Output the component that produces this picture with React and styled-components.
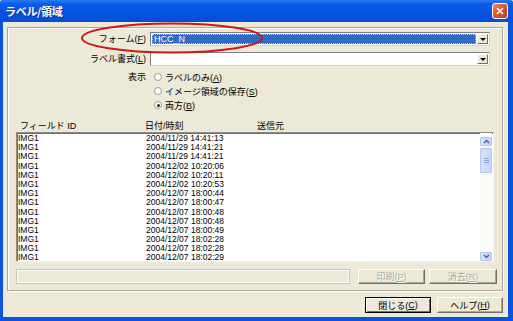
import React from 'react';
import styled, { createGlobalStyle } from 'styled-components';

const GlobalStyle = createGlobalStyle`
    html, body {
        margin: 0;
        padding: 0;
        background: #fff;
    }
    body {
        font-family: "Liberation Sans", "Noto Sans CJK JP", sans-serif;
        font-size: 9px;
        color: #000;
    }
`;

const Window = styled.div`
    position: relative;
    width: 513px;
    height: 321px;
    display: flex;
    flex-direction: column;
    overflow: hidden;
`;

const TitleBar = styled.div`
    height: 22px;
    flex: none;
    display: flex;
    align-items: center;
    justify-content: space-between;
    padding: 0 5px 0 5px;
    box-sizing: border-box;
    background: linear-gradient(to bottom, #2a7cf2 0%, #0a5ce8 18%, #0553e1 55%, #0450dc 85%, #0a4cc8 100%);
    border-radius: 2px 2px 0 0;
`;

const Title = styled.span`
    color: #fff;
    font-family: "Noto Sans CJK JP", sans-serif;
    font-weight: bold;
    font-size: 11px;
    text-shadow: 1px 1px 0 #0b2f8c;
    letter-spacing: -0.3px;
`;

const CloseButton = styled.div`
    width: 16px;
    height: 16px;
    box-sizing: border-box;
    border: 1px solid #fff;
    border-radius: 3px;
    background: linear-gradient(135deg, #f08a6c 0%, #e0512c 50%, #c53a18 100%);
    display: flex;
    align-items: center;
    justify-content: center;
`;

const Frame = styled.div`
    flex: 1;
    display: flex;
    background: #0b52dc;
    padding: 0 5px 4px 3px;
`;

const Client = styled.div`
    flex: 1;
    display: flex;
    flex-direction: column;
    background: #ece9d8;
    padding: 5px 5px 4px 4px;
`;

const GroupBox = styled.div`
    height: 264px;
    box-sizing: border-box;
    border: 1px solid #aca899;
    box-shadow: inset 1px 1px 0 #fff, 1px 1px 0 #fff;
    padding: 4px 0 6px 0;
    display: flex;
    flex-direction: column;
`;

const FieldRow = styled.div`
    display: grid;
    grid-template-columns: 138px 340px;
    column-gap: 4px;
    align-items: center;
    height: 14px;
    margin-top: ${({ $gap }) => $gap || 0}px;
`;

const Label = styled.span`
    text-align: right;
    white-space: nowrap;
    line-height: 14px;
`;

const Combo = styled.div`
    height: 14px;
    box-sizing: border-box;
    border: 1px solid #7f7f7f;
    border-right-color: #d4d0c8;
    border-bottom-color: #d4d0c8;
    background: #fff;
    display: flex;
    align-items: stretch;
    padding: 1px;
`;

const ComboText = styled.div`
    flex: 1;
    margin-right: 1px;
    padding-left: 2px;
    line-height: 10px;
    box-sizing: border-box;
    background: ${({ $selected }) => ($selected ? '#316ac5' : '#fff')};
    color: ${({ $selected }) => ($selected ? '#fff' : '#000')};
    outline: ${({ $selected }) => ($selected ? '1px dotted #b9c6e6' : 'none')};
    outline-offset: -1px;
`;

const DropButton = styled.div`
    width: 11px;
    box-sizing: border-box;
    background: #ece9d8;
    border: 1px solid;
    border-color: #fff #716f64 #716f64 #fff;
    display: flex;
    align-items: center;
    justify-content: center;

    &:after {
        content: '';
        border-left: 3px solid transparent;
        border-right: 3px solid transparent;
        border-top: 3px solid #000;
    }
`;

const DisplayGroup = styled.div`
    display: grid;
    grid-template-columns: 138px auto;
    column-gap: 8px;
    margin-top: 4px;
`;

const RadioList = styled.div`
    display: flex;
    flex-direction: column;
`;

const RadioItem = styled.div`
    height: 14px;
    display: flex;
    align-items: center;
    gap: 3px;
    white-space: nowrap;
`;

const RadioCircle = styled.span`
    width: 8px;
    height: 8px;
    box-sizing: border-box;
    border-radius: 50%;
    border: 1px solid #9c9b94;
    background: #fdfdfb;
    display: flex;
    align-items: center;
    justify-content: center;

    &:after {
        content: '';
        width: 3px;
        height: 3px;
        border-radius: 50%;
        background: ${({ $checked }) => ($checked ? '#222' : 'transparent')};
    }
`;

const ListHeader = styled.div`
    display: grid;
    grid-template-columns: 125px 112px 1fr;
    height: 14px;
    align-items: center;
    margin-top: 6px;
    padding-left: 12px;
    white-space: nowrap;
`;

const ListBox = styled.div`
    width: 478px;
    height: 130px;
    margin-left: 8px;
    box-sizing: border-box;
    background: #fff;
    border: 1px solid #8d8b82;
    border-right-color: #f4f3ee;
    border-bottom-color: #f4f3ee;
    box-shadow: inset 1px 1px 0 #6f6e68;
    display: flex;
    overflow: hidden;
`;

const Rows = styled.div`
    flex: 1;
    padding-top: 1px;
    padding-left: 1px;
    overflow: hidden;
`;

const Row = styled.div`
    display: grid;
    grid-template-columns: 128px 1fr;
    height: 9.2px;
    line-height: 9.2px;
    font-size: 8.5px;
    font-family: "Liberation Sans", sans-serif;
    white-space: nowrap;
`;

const ScrollBar = styled.div`
    width: 12px;
    margin-right: 1px;
    padding-top: 4px;
    background: #fbfbf8;
    display: flex;
    flex-direction: column;
`;

const ScrollArrow = styled.div`
    height: 9px;
    box-sizing: border-box;
    border: 1px solid #b5c8f2;
    border-radius: 1px;
    background: linear-gradient(to right, #d7e3fb, #c3d3f8);
    display: flex;
    align-items: center;
    justify-content: center;
    margin-top: ${({ $bottom }) => ($bottom ? 'auto' : '0')};
`;

const Thumb = styled.div`
    height: 25px;
    margin-top: 2px;
    box-sizing: border-box;
    border: 1px solid #b5c8f2;
    border-radius: 1px;
    background: linear-gradient(to right, #d6e2fb, #c6d6f9);
    display: flex;
    flex-direction: column;
    align-items: center;
    justify-content: center;
    gap: 1px;
`;

const Grip = styled.span`
    width: 5px;
    height: 1px;
    background: #8aa3da;
`;

const BottomRow = styled.div`
    display: flex;
    height: 15px;
    margin-top: 7px;
    margin-left: 8px;
`;

const Progress = styled.div`
    width: 334px;
    box-sizing: border-box;
    border: 1px solid #c9c6b8;
    box-shadow: inset 1px 1px 0 #fff, inset -1px -1px 0 #fff;
    margin-right: 8px;
`;

const Button = styled.div`
    width: ${({ $w }) => $w}px;
    height: 100%;
    box-sizing: border-box;
    display: flex;
    align-items: center;
    justify-content: center;
    background: #ece9d8;
    white-space: nowrap;
    border: 1px solid;
    border-color: ${({ $default }) => ($default ? '#000' : '#fff #716f64 #716f64 #fff')};
    box-shadow: ${({ $default }) =>
        $default ? 'inset 1px 1px 0 #fff, inset -1px -1px 0 #716f64' : 'inset -1px -1px 0 #aca899'};
    color: ${({ $disabled }) => ($disabled ? '#aca899' : '#000')};
    text-shadow: ${({ $disabled }) => ($disabled ? '1px 1px 0 #fff' : 'none')};
    margin-left: ${({ $gap }) => $gap || 0}px;
`;

const Footer = styled.div`
    display: flex;
    justify-content: flex-end;
    height: 16px;
    margin-top: 6px;
`;

const Annotation = styled.svg`
    position: absolute;
    left: 80px;
    top: 21px;
    pointer-events: none;
`;

const rows = [
    '2004/11/29 14:41:13',
    '2004/11/29 14:41:21',
    '2004/11/29 14:41:21',
    '2004/12/02 10:20:06',
    '2004/12/02 10:20:11',
    '2004/12/02 10:20:53',
    '2004/12/07 18:00:44',
    '2004/12/07 18:00:47',
    '2004/12/07 18:00:48',
    '2004/12/07 18:00:48',
    '2004/12/07 18:00:49',
    '2004/12/07 18:02:28',
    '2004/12/07 18:02:28',
    '2004/12/07 18:02:29',
];

const Chevron = ({ up }) => (
    <svg width="7" height="5" viewBox="0 0 7 5">
        <path d={up ? 'M1 4 L3.5 1.5 L6 4' : 'M1 1 L3.5 3.5 L6 1'} fill="none" stroke="#4d6185" strokeWidth="1.4" />
    </svg>
);

const App = () => {
    return (
        <>
            <GlobalStyle />
            <Window>
                <TitleBar>
                    <Title>ラベル/領域</Title>
                    <CloseButton>
                        <svg width="8" height="8" viewBox="0 0 8 8">
                            <path d="M1 1 L7 7 M7 1 L1 7" stroke="#fff" strokeWidth="1.6" />
                        </svg>
                    </CloseButton>
                </TitleBar>

                <Frame>
                    <Client>
                        <GroupBox>
                            <FieldRow>
                                <Label>
                                    フォーム(<u>F</u>)
                                </Label>
                                <Combo>
                                    <ComboText $selected>HCC_N</ComboText>
                                    <DropButton />
                                </Combo>
                            </FieldRow>
                            <FieldRow $gap={6}>
                                <Label>
                                    ラベル書式(<u>L</u>)
                                </Label>
                                <Combo>
                                    <ComboText />
                                    <DropButton />
                                </Combo>
                            </FieldRow>

                            <DisplayGroup>
                                <Label>表示</Label>
                                <RadioList>
                                    <RadioItem>
                                        <RadioCircle />
                                        <span>
                                            ラベルのみ(<u>A</u>)
                                        </span>
                                    </RadioItem>
                                    <RadioItem>
                                        <RadioCircle />
                                        <span>
                                            イメージ領域の保存(<u>S</u>)
                                        </span>
                                    </RadioItem>
                                    <RadioItem>
                                        <RadioCircle $checked />
                                        <span>
                                            両方(<u>B</u>)
                                        </span>
                                    </RadioItem>
                                </RadioList>
                            </DisplayGroup>

                            <ListHeader>
                                <span>フィールド ID</span>
                                <span>日付/時刻</span>
                                <span>送信元</span>
                            </ListHeader>

                            <ListBox>
                                <Rows>
                                    {rows.map((date, i) => (
                                        <Row key={i}>
                                            <span>IMG1</span>
                                            <span>{date}</span>
                                        </Row>
                                    ))}
                                </Rows>
                                <ScrollBar>
                                    <ScrollArrow>
                                        <Chevron up />
                                    </ScrollArrow>
                                    <Thumb>
                                        <Grip />
                                        <Grip />
                                        <Grip />
                                    </Thumb>
                                    <ScrollArrow $bottom>
                                        <Chevron />
                                    </ScrollArrow>
                                </ScrollBar>
                            </ListBox>

                            <BottomRow>
                                <Progress />
                                <Button $w={67} $disabled>
                                    印刷(<u>P</u>)
                                </Button>
                                <Button $w={68} $gap={4} $disabled>
                                    消去(<u>R</u>)
                                </Button>
                            </BottomRow>
                        </GroupBox>

                        <Footer>
                            <Button $w={66} $default>
                                閉じる(<u>C</u>)
                            </Button>
                            <Button $w={66} $gap={6}>
                                ヘルプ(<u>H</u>)
                            </Button>
                        </Footer>
                    </Client>
                </Frame>

                <Annotation width="186" height="34" viewBox="0 0 186 34">
                    <ellipse cx="92" cy="17" rx="90" ry="14.5" fill="none" stroke="#d0161a" strokeWidth="2" />
                </Annotation>
            </Window>
        </>
    );
};

export default App;
